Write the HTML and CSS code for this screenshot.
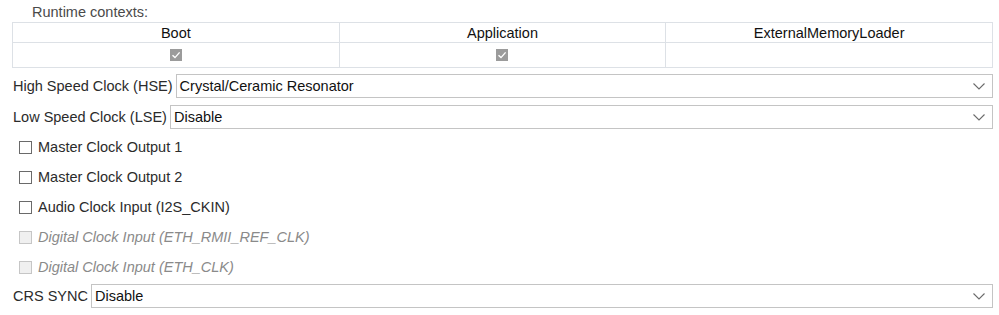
FILE: index.html
```html
<!DOCTYPE html>
<html lang="en">
<head>
  <meta charset="UTF-8" />
  <title>RCC Mode and Configuration</title>
  <link rel="stylesheet" href="styles.css">
</head>
<body>

  <div class="rcc-panel">
    <div class="runtime-title">Runtime contexts:</div>
    <table class="runtime-table">
      <tr>
        <th>Boot</th>
        <th>Application</th>
        <th>ExternalMemoryLoader</th>
      </tr>
      <tr>
        <td><span class="ctx-check"><svg width="10" height="10" viewBox="0 0 10 10"><polyline points="1.5,5.2 4,7.6 8.6,2.4" fill="none" stroke="#fff" stroke-width="1.4"/></svg></span></td>
        <td><span class="ctx-check"><svg width="10" height="10" viewBox="0 0 10 10"><polyline points="1.5,5.2 4,7.6 8.6,2.4" fill="none" stroke="#fff" stroke-width="1.4"/></svg></span></td>
        <td></td>
      </tr>
    </table>

    <div class="field field-hse">
      <label>High Speed Clock (HSE)</label>
      <div class="combo">
        <span>Crystal/Ceramic Resonator</span>
        <svg class="chevron" width="12" height="7" viewBox="0 0 12 7"><polyline points="0.5,0.5 6,6 11.5,0.5" fill="none" stroke="#6b6b6b" stroke-width="1.1"/></svg>
      </div>
    </div>

    <div class="field field-lse">
      <label>Low Speed Clock (LSE)</label>
      <div class="combo">
        <span>Disable</span>
        <svg class="chevron" width="12" height="7" viewBox="0 0 12 7"><polyline points="0.5,0.5 6,6 11.5,0.5" fill="none" stroke="#6b6b6b" stroke-width="1.1"/></svg>
      </div>
    </div>

    <ul class="options">
      <li><span class="box"></span>Master Clock Output 1</li>
      <li><span class="box"></span>Master Clock Output 2</li>
      <li><span class="box"></span>Audio Clock Input (I2S_CKIN)</li>
      <li class="disabled"><span class="box"></span>Digital Clock Input (ETH_RMII_REF_CLK)</li>
      <li class="disabled"><span class="box"></span>Digital Clock Input (ETH_CLK)</li>
    </ul>

    <div class="field field-crs">
      <label>CRS SYNC</label>
      <div class="combo">
        <span>Disable</span>
        <svg class="chevron" width="12" height="7" viewBox="0 0 12 7"><polyline points="0.5,0.5 6,6 11.5,0.5" fill="none" stroke="#6b6b6b" stroke-width="1.1"/></svg>
      </div>
    </div>
  </div>

</body>
</html>
```

FILE: styles.css
```css
:root {
  --text: #2b2b2b;
  --muted: #4a4a4a;
  --grid: #dde1e6;
  --field-border: #c4c4c4;
  --disabled: #8a8a8a;
}

body {
  margin: 0;
  background: #ffffff;
  color: var(--text);
  font-family: "Liberation Sans", Arial, sans-serif;
  font-size: 14.5px;
}

.rcc-panel {
  padding: 0 6px 0 12px;
}

.runtime-title {
  height: 22px;
  line-height: 24px;
  padding-left: 20px;
  color: var(--muted);
}

.runtime-table {
  width: 100%;
  border-collapse: collapse;
  table-layout: fixed;
}

.runtime-table th,
.runtime-table td {
  border: 1px solid var(--grid);
  text-align: center;
  font-weight: normal;
  padding: 0;
  line-height: 18px;
}

.runtime-table th {
  height: 19px;
  color: #111;
}

.runtime-table td {
  height: 24px;
}

.ctx-check {
  display: inline-flex;
  align-items: center;
  justify-content: center;
  width: 12px;
  height: 12px;
  margin-top: 3px;
  background: #9b9b9b;
}

.field {
  display: flex;
  align-items: center;
  gap: 3px;
  margin-top: 6px;
}

.field-lse {
  margin-top: 7px;
}

.field label {
  padding-left: 1px;
  white-space: nowrap;
}

.combo {
  flex: 1;
  display: flex;
  align-items: center;
  justify-content: space-between;
  height: 22px;
  border: 1px solid var(--field-border);
  padding: 0 7px 0 3px;
  color: #111;
}

.chevron {
  display: block;
}

.options {
  list-style: none;
  margin: 3px 0 0;
  padding: 0;
}

.options li {
  display: flex;
  align-items: center;
  height: 30px;
  padding-left: 7px;
}

.box {
  width: 11px;
  height: 11px;
  border: 1px solid #6a6a6a;
  margin-right: 6px;
  background: #fff;
}

.options li.disabled {
  color: var(--disabled);
  font-style: italic;
}

.options li.disabled .box {
  border-color: #c6c6c6;
  background: #f0f0f0;
}

.field-crs {
  margin-top: 2px;
}
```
